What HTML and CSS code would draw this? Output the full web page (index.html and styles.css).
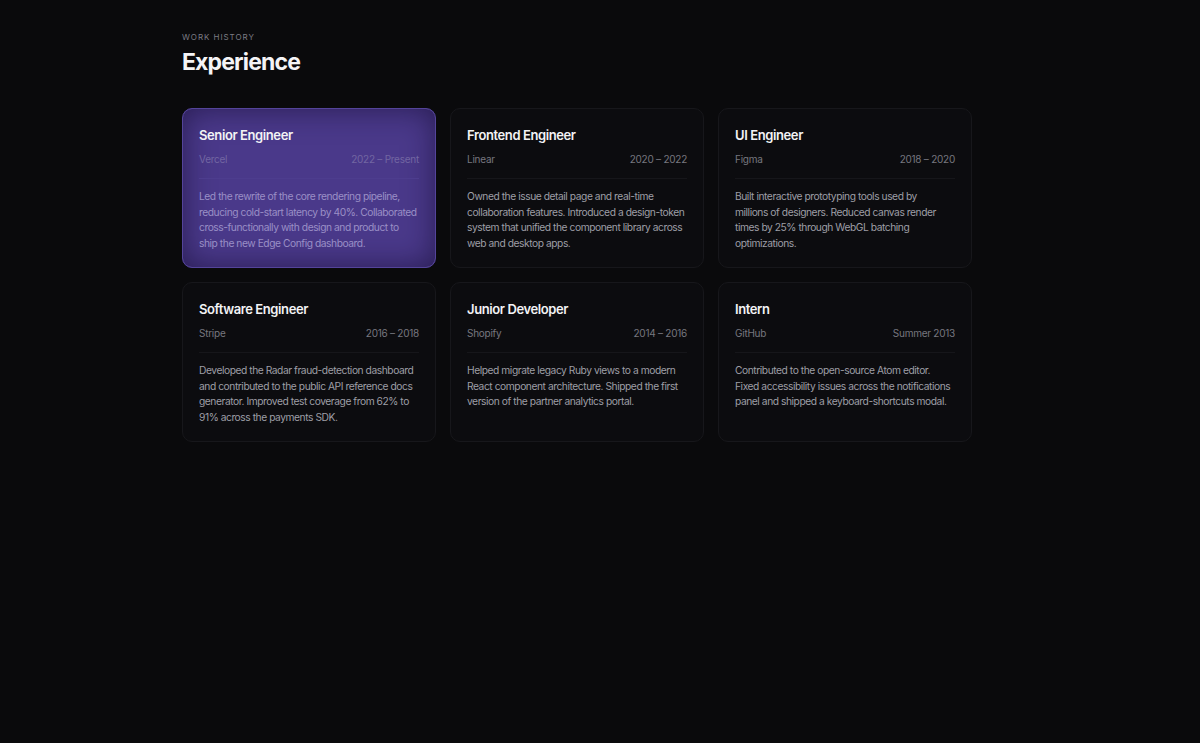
FILE: index.html
```html
<!DOCTYPE html>
<html lang="en">
<head>
<meta charset="utf-8">
<title>Experience</title>
<link rel="stylesheet" href="styles.css">
</head>
<body>
<main class="page">
  <header class="head">
    <p class="eyebrow">WORK HISTORY</p>
    <h1 class="title">Experience</h1>
  </header>
  <section class="grid">
    <article class="card card--active">
      <h2 class="role">Senior Engineer</h2>
      <div class="meta"><span>Vercel</span><span>2022 – Present</span></div>
      <p class="desc">Led the rewrite of the core rendering pipeline, reducing cold-start latency by 40%. Collaborated cross-functionally with design and product to ship the new Edge Config dashboard.</p>
    </article>
    <article class="card">
      <h2 class="role">Frontend Engineer</h2>
      <div class="meta"><span>Linear</span><span>2020 – 2022</span></div>
      <p class="desc">Owned the issue detail page and real-time collaboration features. Introduced a design-token system that unified the component library across web and desktop apps.</p>
    </article>
    <article class="card">
      <h2 class="role">UI Engineer</h2>
      <div class="meta"><span>Figma</span><span>2018 – 2020</span></div>
      <p class="desc desc--narrow">Built interactive prototyping tools used by millions of designers. Reduced canvas render times by 25% through WebGL batching optimizations.</p>
    </article>
    <article class="card">
      <h2 class="role">Software Engineer</h2>
      <div class="meta"><span>Stripe</span><span>2016 – 2018</span></div>
      <p class="desc">Developed the Radar fraud-detection dashboard and contributed to the public API reference docs generator. Improved test coverage from 62% to 91% across the payments SDK.</p>
    </article>
    <article class="card">
      <h2 class="role">Junior Developer</h2>
      <div class="meta"><span>Shopify</span><span>2014 – 2016</span></div>
      <p class="desc">Helped migrate legacy Ruby views to a modern React component architecture. Shipped the first version of the partner analytics portal.</p>
    </article>
    <article class="card">
      <h2 class="role">Intern</h2>
      <div class="meta"><span>GitHub</span><span>Summer 2013</span></div>
      <p class="desc">Contributed to the open-source Atom editor. Fixed accessibility issues across the notifications panel and shipped a keyboard-shortcuts modal.</p>
    </article>
  </section>
</main>
</body>
</html>
```
FILE: styles.css
```css
html, body {
  margin: 0;
  padding: 0;
  background: #0a0a0c;
}
body {
  font-family: Inter, "Liberation Sans", sans-serif;
  color: #ededf0;
  min-height: 743px;
}
.page {
  width: 790px;
  margin-left: 182px;
  padding-top: 31px;
}
.head {
  margin-bottom: 31.6px;
}
.eyebrow {
  margin: 0;
  font-size: 8px;
  letter-spacing: 0.95px;
  color: #7c7c84;
  line-height: 12px;
}
.title {
  margin: 5.4px 0 0;
  font-size: 23px;
  font-weight: 700;
  letter-spacing: -0.85px;
  line-height: 28px;
  color: #f4f4f6;
}
.grid {
  display: grid;
  grid-template-columns: repeat(3, 1fr);
  gap: 14px;
}
.card {
  background: #0c0c0f;
  border: 1px solid #17171b;
  border-radius: 10px;
  padding: 17px 16px 16px 16px;
  height: 160px;
  box-sizing: border-box;
}
.card--active {
  background: #4a398a;
  border-color: #54449a;
  box-shadow: inset 0 0 30px rgba(18, 10, 45, 0.6);
}
.role {
  margin: 0;
  font-size: 13px;
  font-weight: 600;
  line-height: 18px;
  color: #f3f3f5;
  letter-spacing: -0.4px;
}
.meta {
  display: flex;
  justify-content: space-between;
  margin-top: 8.5px;
  padding-bottom: 11.5px;
  border-bottom: 1px solid #16161a;
  font-size: 10px;
  line-height: 14px;
  letter-spacing: -0.25px;
  color: #77777f;
}
.desc {
  margin: 10px 0 0;
  font-size: 10.25px;
  line-height: 15.6px;
  letter-spacing: -0.45px;
  color: #9e9ea6;
}
.desc--narrow {
  max-width: 212px;
}
.card--active .meta {
  color: #7266a2;
  border-bottom-color: #4d3d8e;
}
.card--active .desc {
  color: #9a8fc6;
}
```
